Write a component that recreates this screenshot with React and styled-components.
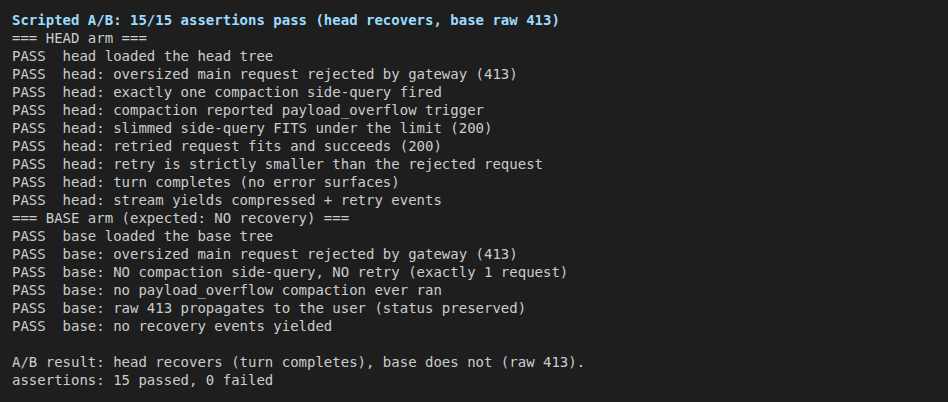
import React from "react";
import styled, {createGlobalStyle} from "styled-components";

const Global = createGlobalStyle`
  html, body {
    margin: 0;
    padding: 0;
    background: #1e1e1e;
  }
`;

const Terminal = styled.div`
  box-sizing: border-box;
  width: 948px;
  height: 402px;
  padding: 11px 12px;
  background: #1e1e1e;
  color: #cccccc;
  font-family: "DejaVu Sans Mono", "Liberation Mono", monospace;
  font-size: 14px;
  line-height: 18px;
  overflow: hidden;
`;

const Line = styled.div`
  white-space: pre;
  height: 18px;
  color: ${p => p.$title ? "#9cdcfe" : "#cccccc"};
  font-weight: ${p => p.$title ? 700 : 400};
`;

const lines = [
    "=== HEAD arm ===",
    "PASS  head loaded the head tree",
    "PASS  head: oversized main request rejected by gateway (413)",
    "PASS  head: exactly one compaction side-query fired",
    "PASS  head: compaction reported payload_overflow trigger",
    "PASS  head: slimmed side-query FITS under the limit (200)",
    "PASS  head: retried request fits and succeeds (200)",
    "PASS  head: retry is strictly smaller than the rejected request",
    "PASS  head: turn completes (no error surfaces)",
    "PASS  head: stream yields compressed + retry events",
    "=== BASE arm (expected: NO recovery) ===",
    "PASS  base loaded the base tree",
    "PASS  base: oversized main request rejected by gateway (413)",
    "PASS  base: NO compaction side-query, NO retry (exactly 1 request)",
    "PASS  base: no payload_overflow compaction ever ran",
    "PASS  base: raw 413 propagates to the user (status preserved)",
    "PASS  base: no recovery events yielded",
    "",
    "A/B result: head recovers (turn completes), base does not (raw 413).",
    "assertions: 15 passed, 0 failed",
];

export default () => {
    return <>
        <Global/>
        <Terminal>
            <Line $title>Scripted A/B: 15/15 assertions pass (head recovers, base raw 413)</Line>
            {lines.map((l, i) => <Line key={i}>{l}</Line>)}
        </Terminal>
    </>
}
